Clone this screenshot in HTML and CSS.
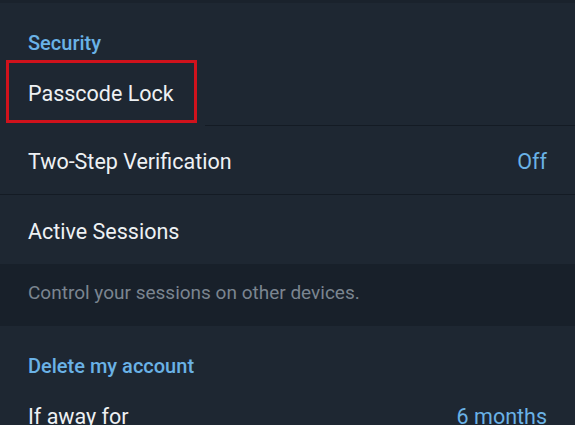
FILE: index.html
```html
<!DOCTYPE html>
<html>
<head>
  <title>Privacy and Security</title>
  <link rel="stylesheet" href="styles.css">
</head>
<body>
  <div class="screen">
    <div class="edge"></div>
    <div class="section">
      <div class="header">Security</div>
      <div class="row row-marked">
        <span class="label">Passcode Lock</span>
        <div class="mark"></div>
      </div>
      <div class="row">
        <span class="label">Two-Step Verification</span>
        <span class="value">Off</span>
      </div>
      <div class="row last">
        <span class="label">Active Sessions</span>
      </div>
    </div>
    <div class="hint">Control your sessions on other devices.</div>
    <div class="section">
      <div class="header">Delete my account</div>
      <div class="row last">
        <span class="label">If away for</span>
        <span class="value">6 months</span>
      </div>
    </div>
  </div>
</body>
</html>
```

FILE: styles.css
```css
body {
  margin: 0;
  background-color: #1e2732;
  font-family: Roboto, "Noto Sans", sans-serif;
}

.screen {
  width: 575px;
  height: 425px;
  overflow: hidden;
}

.edge {
  height: 3px;
  background-color: #1a222c;
}

.section {
  background-color: #1e2732;
}

.header {
  height: 54px;
  padding-left: 28px;
  padding-top: 28px;
  box-sizing: border-box;
  font-size: 20px;
  line-height: 24px;
  font-weight: 500;
  color: #6ab2e6;
}

.row {
  position: relative;
  display: flex;
  align-items: center;
  justify-content: space-between;
  height: 69px;
  padding: 3px 28px 0;
  box-sizing: border-box;
  border-bottom: 1px solid #141b24;
}

.row.last {
  border-bottom: none;
}

.row-marked {
  border-bottom: none;
}

.row-marked::after {
  content: "";
  position: absolute;
  left: 205px;
  right: 0;
  bottom: 0;
  height: 1px;
  background-color: #141b24;
}

.label {
  font-size: 21.5px;
  color: #eef1f4;
}

.value {
  font-size: 21.5px;
  color: #6ab2e6;
}

.mark {
  position: absolute;
  left: 6px;
  top: 3px;
  width: 191px;
  height: 63px;
  border: 3px solid #d0121c;
  box-sizing: border-box;
}

.hint {
  height: 62px;
  display: flex;
  align-items: center;
  padding-left: 28px;
  padding-bottom: 5px;
  box-sizing: border-box;
  background-color: #18202a;
  font-size: 19px;
  color: #7b8590;
}
```
